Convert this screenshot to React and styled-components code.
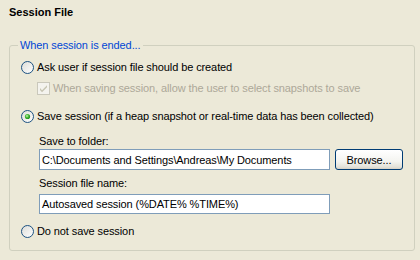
import React from "react";
import styled, { createGlobalStyle } from "styled-components";

const Global = createGlobalStyle`
  html, body { margin: 0; padding: 0; background: #ECE9D8; }
  body { font-family: "Liberation Sans", Arial, sans-serif; font-size: 11px; color: #000; letter-spacing: -0.1px; }
`;

const Page = styled.div`
  width: 420px;
  height: 260px;
  padding: 6px 0 0 9px;
  box-sizing: border-box;
`;

const Title = styled.div`
  font-weight: bold;
  line-height: 13px;
  height: 13px;
  margin-bottom: 26px;
  letter-spacing: 0;
`;

const Group = styled.div`
  position: relative;
  width: 406px;
  box-sizing: border-box;
  border: 1px solid #D0D0BF;
  border-radius: 3px;
  padding: 14px 0 12px 11px;
  display: flex;
  flex-direction: column;
`;

const Legend = styled.span`
  position: absolute;
  top: -8px;
  left: 8px;
  padding: 0 2px;
  line-height: 14px;
  background: #ECE9D8;
  color: #0046D5;
`;

const Row = styled.label`
  display: flex;
  align-items: center;
  height: 14px;
  margin-top: ${(p) => p.$mt || 0}px;
  margin-left: ${(p) => p.$indent || 0}px;
  gap: ${(p) => p.$gap || 3}px;
  color: ${(p) => (p.$disabled ? "#ACA899" : "#000")};
  white-space: nowrap;
`;

const Caption = styled.div`
  height: 14px;
  line-height: 14px;
  margin-top: ${(p) => p.$mt || 0}px;
  margin-left: 18px;
`;

const FieldRow = styled.div`
  display: flex;
  align-items: center;
  gap: 5px;
  margin-top: ${(p) => p.$mt || 0}px;
  margin-left: 18px;
`;

const TextField = styled.div`
  width: 291px;
  height: ${(p) => p.$h}px;
  box-sizing: border-box;
  border: 1px solid #7F9DB9;
  background: #fff;
  padding-left: 2px;
  display: flex;
  align-items: center;
  white-space: nowrap;
`;

const Button = styled.div`
  width: 68px;
  height: 21px;
  box-sizing: border-box;
  border: 1px solid #003C74;
  border-radius: 3px;
  background: linear-gradient(#FFFFFF 0%, #F4F4F0 60%, #E3E1D8 90%, #D6D0C5 100%);
  display: flex;
  align-items: center;
  justify-content: center;
`;

const Radio = ({ checked }) => (
  <svg width="13" height="13" viewBox="0 0 13 13">
    <defs>
      <linearGradient id="rg" x1="0" y1="0" x2="1" y2="1">
        <stop offset="0" stopColor="#DCDCD7" />
        <stop offset="1" stopColor="#FFFFFF" />
      </linearGradient>
      <radialGradient id="dot" cx="0.4" cy="0.4" r="0.6">
        <stop offset="0" stopColor="#D0F5C0" />
        <stop offset="0.5" stopColor="#4DBE3A" />
        <stop offset="1" stopColor="#1E8C1E" />
      </radialGradient>
    </defs>
    <circle cx="6.5" cy="6.5" r="6" fill="url(#rg)" stroke="#1C5180" strokeWidth="1" />
    {checked && <circle cx="6.5" cy="6.5" r="2.6" fill="url(#dot)" />}
  </svg>
);

const Check = () => (
  <svg width="13" height="13" viewBox="0 0 13 13">
    <rect x="0.5" y="0.5" width="12" height="12" fill="#F4F3EE" stroke="#CAC8BB" />
    <path d="M3 6 L5 8.2 L10 3.3 L10 5.3 L5 10.2 L3 8 Z" fill="#C7C5B2" />
  </svg>
);

export default function App() {
  return (
    <>
      <Global />
      <Page>
        <Title>Session File</Title>
        <Group>
          <Legend>When session is ended...</Legend>
          <Row>
            <Radio />
            <span>Ask user if session file should be created</span>
          </Row>
          <Row $mt={7} $indent={16} $disabled>
            <Check />
            <span>When saving session, allow the user to select snapshots to save</span>
          </Row>
          <Row $mt={14}>
            <Radio checked />
            <span>Save session (if a heap snapshot or real-time data has been collected)</span>
          </Row>
          <Caption $mt={11}>Save to folder:</Caption>
          <FieldRow $mt={1}>
            <TextField $h={21}>C:\Documents and Settings\Andreas\My Documents</TextField>
            <Button>Browse...</Button>
          </FieldRow>
          <Caption $mt={6}>Session file name:</Caption>
          <FieldRow $mt={4}>
            <TextField $h={20}>Autosaved session (%DATE% %TIME%)</TextField>
          </FieldRow>
          <Row $mt={10}>
            <Radio />
            <span>Do not save session</span>
          </Row>
        </Group>
      </Page>
    </>
  );
}
